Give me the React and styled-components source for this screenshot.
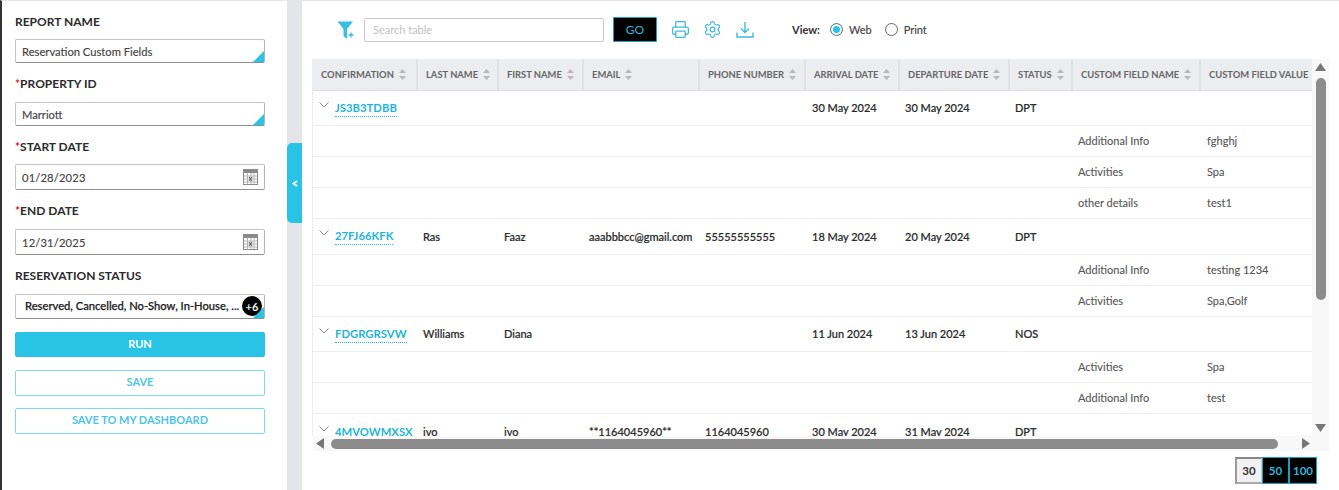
import React from "react";
import styled, { createGlobalStyle } from "styled-components";
import { Printer, Settings } from "lucide-react";

const GlobalStyle = createGlobalStyle`
  html, body {
    margin: 0;
    padding: 0;
    height: 100%;
    background: #fff;
    overflow: hidden;
  }
  body {
    font-family: Lato, "Open Sans", sans-serif;
    color: #333;
  }
`;

const fields = [
  { label: "REPORT NAME", value: "Reservation Custom Fields", kind: "select", labelGap: 9, gap: 12 },
  { label: "PROPERTY ID", value: "Marriott", kind: "select", required: true, labelGap: 10, gap: 12 },
  { label: "START DATE", value: "01/28/2023", kind: "date", required: true, labelGap: 9, gap: 12 },
  { label: "END DATE", value: "12/31/2025", kind: "date", required: true, labelGap: 10, gap: 12 },
];

const columns = [
  { name: "CONFIRMATION", width: 104 },
  { name: "LAST NAME", width: 81 },
  { name: "FIRST NAME", width: 85 },
  { name: "EMAIL", width: 116 },
  { name: "PHONE NUMBER", width: 106 },
  { name: "ARRIVAL DATE", width: 94 },
  { name: "DEPARTURE DATE", width: 110 },
  { name: "STATUS", width: 63 },
  { name: "CUSTOM FIELD NAME", width: 128 },
  { name: "CUSTOM FIELD VALUE", width: 112, noSort: true },
];

const reservations = [
  {
    id: "JS3B3TDBB",
    arrival: "30 May 2024",
    departure: "30 May 2024",
    status: "DPT",
    height: 35,
    details: [
      ["Additional Info", "fghghj"],
      ["Activities", "Spa"],
      ["other details", "test1"],
    ],
  },
  {
    id: "27FJ66KFK",
    last: "Ras",
    first: "Faaz",
    email: "aaabbbcc@gmail.com",
    phone: "55555555555",
    arrival: "18 May 2024",
    departure: "20 May 2024",
    status: "DPT",
    height: 36,
    details: [
      ["Additional Info", "testing 1234"],
      ["Activities", "Spa,Golf"],
    ],
  },
  {
    id: "FDGRGRSVW",
    last: "Williams",
    first: "Diana",
    arrival: "11 Jun 2024",
    departure: "13 Jun 2024",
    status: "NOS",
    height: 35,
    details: [
      ["Activities", "Spa"],
      ["Additional Info", "test"],
    ],
  },
  {
    id: "4MVOWMXSX",
    last: "ivo",
    first: "ivo",
    email: "**1164045960**",
    phone: "1164045960",
    arrival: "30 May 2024",
    departure: "31 May 2024",
    status: "DPT",
    height: 37,
    details: [],
  },
];

const Page = styled.div`
  display: flex;
  height: 490px;
  width: 1339px;
  border-left: 2px solid #333;
  border-top: 1px solid #e6e6e6;
  box-sizing: border-box;
  overflow: hidden;
`;

const Sidebar = styled.aside`
  width: 285px;
  flex: none;
  box-sizing: border-box;
  padding: 12px 22px 0 13px;
  display: flex;
  flex-direction: column;
`;

const Label = styled.label`
  display: block;
  height: 17px;
  line-height: 17px;
  font-size: 12px;
  font-weight: 700;
  color: #2b2b2b;
  margin-bottom: ${(p) => p.$gap}px;
  span {
    color: #e02020;
  }
`;

const Field = styled.div`
  margin-bottom: ${(p) => p.$gap}px;
`;

const InputBox = styled.div`
  position: relative;
  box-sizing: border-box;
  height: ${(p) => p.$height}px;
  border: 1px solid #c4c4c4;
  border-bottom: 1px solid #8f8f8f;
  border-right-color: #b5b5b5;
  border-radius: 2px;
  display: flex;
  align-items: center;
  justify-content: space-between;
  padding: 0 6px;
  font-size: 11.2px;
  color: #444;
  background: #fff;
  -webkit-text-stroke: 0.15px #444;
  letter-spacing: ${(p) => (p.$date ? "0.15px" : "0")};
`;

const Corner = styled.i`
  position: absolute;
  right: 0;
  bottom: 0;
  width: 0;
  height: 0;
  border-style: solid;
  border-width: 0 0 11px 11px;
  border-color: transparent transparent #29c3e6 transparent;
`;

const StatusText = styled.span`
  font-size: 11.2px;
  font-weight: 500;
  color: #222;
  padding: 0 0 2px 3px;
  white-space: nowrap;
  -webkit-text-stroke: 0.25px #222;
`;

const CountBadge = styled.b`
  position: absolute;
  right: 2px;
  top: 1px;
  width: 20px;
  height: 20px;
  border-radius: 50%;
  background: #000;
  color: #fff;
  font-size: 11px;
  font-weight: 700;
  display: flex;
  align-items: center;
  justify-content: center;
`;

const ActionButton = styled.button`
  display: block;
  width: 100%;
  box-sizing: border-box;
  height: ${(p) => (p.$primary ? 25 : 26)}px;
  margin-bottom: ${(p) => (p.$primary ? 13 : 12)}px;
  border: 1px solid ${(p) => (p.$primary ? "#29c3e6" : "#7fd8ee")};
  border-radius: 2px;
  background: ${(p) => (p.$primary ? "#29c3e6" : "#fff")};
  color: ${(p) => (p.$primary ? "#fff" : "#4fc3e4")};
  font-family: inherit;
  font-size: 11px;
  font-weight: 700;
  padding: 0 0 ${(p) => (p.$primary ? 2 : 4)}px;
`;

const Divider = styled.div`
  position: relative;
  width: 15px;
  flex: none;
  background: #e4e5e9;
`;

const CollapseTab = styled.div`
  position: absolute;
  left: 0;
  top: 142px;
  width: 15px;
  height: 80px;
  background: #29c3e6;
  border-radius: 5px 0 0 5px;
  display: flex;
  align-items: center;
  justify-content: center;
`;

const Main = styled.main`
  flex: 1;
  min-width: 0;
  padding: 16px 10px 0 11px;
  display: flex;
  flex-direction: column;
`;

const Toolbar = styled.div`
  display: flex;
  align-items: center;
  height: 25px;
  padding-left: 24px;
  margin-bottom: 17px;
  flex: none;
`;

const SearchInput = styled.input`
  box-sizing: border-box;
  width: 240px;
  height: 24px;
  margin-left: 9px;
  border: 1px solid #c9c9c9;
  border-radius: 2px;
  padding: 0 8px;
  font-family: inherit;
  font-size: 11px;
  outline: none;
  &::placeholder {
    color: #c2c2c2;
  }
`;

const GoButton = styled.button`
  box-sizing: border-box;
  width: 44px;
  height: 25px;
  margin-left: 9px;
  background: #000;
  border: 1px solid #1b9fc0;
  border-radius: 1px;
  color: #29b6d8;
  font-family: inherit;
  font-size: 12px;
  padding: 0;
`;

const IconSlot = styled.span`
  display: inline-flex;
  color: #3dbbe0;
  margin-left: ${(p) => p.$left}px;
`;

const ViewLabel = styled.span`
  margin-left: 38px;
  font-size: 11px;
  font-weight: 700;
  color: #333;
`;

const RadioOption = styled.span`
  display: inline-flex;
  align-items: center;
  margin-left: ${(p) => p.$left}px;
  font-size: 11px;
  color: #444;
  -webkit-text-stroke: 0.15px #444;
`;

const RadioDot = styled.i`
  box-sizing: border-box;
  width: 13px;
  height: 13px;
  margin-right: 6px;
  border-radius: 50%;
  border: 1px solid ${(p) => (p.$on ? "#777" : "#666")};
  background: ${(p) => (p.$on ? "#29c3e6" : "#fff")};
  box-shadow: ${(p) => (p.$on ? "inset 0 0 0 2px #fff" : "none")};
`;

const ScrollGrid = styled.div`
  display: grid;
  grid-template-columns: 999px 17px;
  grid-template-rows: 377px 15px;
  flex: none;
`;

const TableClip = styled.div`
  overflow: hidden;
  border-left: 1px solid #ececec;
  margin-left: -1px;
`;

const Table = styled.table`
  table-layout: fixed;
  width: 999px;
  border-collapse: collapse;
`;

const HeadCell = styled.th`
  height: 31px;
  padding: 0 0 0 8px;
  background: #ecedf0;
  border-right: 2px solid #e0e1e4;
  border-bottom: 1px solid #dcdde0;
  box-sizing: border-box;
  font-size: 9.4px;
  font-weight: 700;
  color: #666;
  text-align: left;
  white-space: nowrap;
  &:last-child {
    border-right: 0;
  }
`;

const SortIcon = styled.svg`
  margin-left: 5px;
  vertical-align: -2px;
`;

const Row = styled.tr`
  height: ${(p) => p.$height}px;
  border-bottom: 1px solid #eeeeee;
`;

const Cell = styled.td`
  padding: 0 0 0 ${(p) => p.$pad ?? 8}px;
  font-size: 11px;
  font-weight: ${(p) => (p.$light ? 400 : 500)};
  color: ${(p) => (p.$light ? "#555" : "#2b2b2b")};
  -webkit-text-stroke: ${(p) => (p.$light ? "0.1px #555" : "0.2px #2b2b2b")};
  white-space: nowrap;
  overflow: hidden;
`;

const ConfirmCell = styled.div`
  display: flex;
  align-items: flex-start;
  padding: 2px 0 0 6px;
  svg {
    margin: 1px 6px 0 0;
    flex: none;
  }
`;

const ConfirmLink = styled.a`
  color: #1fb4d8;
  -webkit-text-stroke: 0;
  font-size: 11.3px;
  font-weight: 700;
  padding-bottom: 2px;
  border-bottom: 1px dotted #1fb4d8;
`;

const Track = styled.div`
  display: flex;
  flex-direction: ${(p) => (p.$vertical ? "column" : "row")};
  align-items: center;
  background: #f8f8f8;
`;

const Thumb = styled.div`
  background: #8c8c8c;
  border-radius: 5px;
  ${(p) => (p.$vertical ? "width: 10px; height: 222px; margin-top: 7px;" : "height: 10px; width: 947px; margin-left: 7px;")}
`;

const ArrowCap = styled.svg`
  flex: none;
  ${(p) => p.$end && (p.$vertical ? "margin-top: auto; margin-bottom: 4px;" : "margin-left: auto; margin-right: 2px;")}
`;

const PageSizes = styled.div`
  display: flex;
  align-self: flex-end;
  margin: 6px 12px 0 0;
`;

const PageSize = styled.button`
  box-sizing: border-box;
  width: ${(p) => p.$width}px;
  height: 27px;
  padding: 0;
  font-family: inherit;
  font-size: 11.5px;
  font-weight: 700;
  background: ${(p) => (p.$active ? "#f1f1f1" : "#000")};
  color: ${(p) => (p.$active ? "#333" : "#29b6d8")};
  border: 1px solid ${(p) => (p.$active ? "#bbb" : "#1b9fc0")};
  ${(p) => p.$active && "border-width: 2px 1px 2px 2px; border-color: #888 #ccc #aaa #999;"}
`;

function CalendarIcon() {
  return (
    <svg width="15" height="16" viewBox="0 0 15 16">
      <rect x="0.5" y="0.5" width="14" height="15" fill="#fff" stroke="#8a8a8a" />
      <rect x="1" y="1" width="13" height="3" fill="#8a8a8a" />
      <path d="M1 7h13M1 10h13M1 13h13M4.500 4v11M8 4v11M11 4v11" stroke="#b5b5b5" strokeWidth="1" />
      <path d="M6 8l3 4M9 8l-3 4" stroke="#666" strokeWidth="1.200" />
    </svg>
  );
}

function FilterIcon() {
  return (
    <svg width="18" height="20" viewBox="0 0 18 20">
      <path d="M0.500 1.500h15.500l-6 7.500v10l-3.500-3v-7z" fill="#36bfe3" />
      <path d="M14 12.500v5M11.500 15h5" stroke="#36bfe3" strokeWidth="1.300" />
    </svg>
  );
}

function DownloadIcon() {
  return (
    <svg width="18" height="18" viewBox="0 0 18 18" fill="none" stroke="#3dbbe0" strokeWidth="1.400">
      <path d="M9 1v10M5 7.500l4 4 4-4" />
      <path d="M1 11.500v4.500h16v-4.500" />
    </svg>
  );
}

function SortCarets() {
  return (
    <SortIcon width="7" height="11" viewBox="0 0 7 11" fill="#b9b9bd">
      <path d="M3.500 0l3.500 4h-7zM3.500 11l-3.500-4h7z" />
    </SortIcon>
  );
}

function Chevron() {
  return (
    <svg width="10" height="6" viewBox="0 0 10 6" fill="none" stroke="#888" strokeWidth="1">
      <path d="M0.500 0.500l4.500 4.500 4.500-4.500" />
    </svg>
  );
}

function CollapseArrow() {
  return (
    <svg width="6" height="7" viewBox="0 0 6 7" fill="none" stroke="#fff" strokeWidth="1.800">
      <path d="M5 1l-3.500 2.500 3.500 2.500" />
    </svg>
  );
}

export default function App() {
  return (
    <>
      <GlobalStyle />
      <Page>
        <Sidebar>
          {fields.map((f) => (
            <div key={f.label}>
              <Label $gap={f.labelGap}>
                {f.required && <span>*</span>}
                {f.label}
              </Label>
              <Field $gap={f.gap}>
                <InputBox $height={f.kind === "date" ? 26 : 24} $date={f.kind === "date"}>
                  {f.value}
                  {f.kind === "date" ? <CalendarIcon /> : <Corner />}
                </InputBox>
              </Field>
            </div>
          ))}
          <Label $gap={10}>RESERVATION STATUS</Label>
          <Field $gap={13}>
            <InputBox $height={25}>
              <StatusText>Reserved, Cancelled, No-Show, In-House, ...</StatusText>
              <CountBadge>+6</CountBadge>
              <Corner />
            </InputBox>
          </Field>
          <ActionButton $primary>RUN</ActionButton>
          <ActionButton>SAVE</ActionButton>
          <ActionButton>SAVE TO MY DASHBOARD</ActionButton>
        </Sidebar>
        <Divider>
          <CollapseTab>
            <CollapseArrow />
          </CollapseTab>
        </Divider>
        <Main>
          <Toolbar>
            <FilterIcon />
            <SearchInput placeholder="Search table" />
            <GoButton>GO</GoButton>
            <IconSlot $left={14}>
              <Printer size={19} strokeWidth={1.6} />
            </IconSlot>
            <IconSlot $left={13}>
              <Settings size={19} strokeWidth={1.5} />
            </IconSlot>
            <IconSlot $left={14}>
              <DownloadIcon />
            </IconSlot>
            <ViewLabel>View:</ViewLabel>
            <RadioOption $left={10}>
              <RadioDot $on />
              Web
            </RadioOption>
            <RadioOption $left={13}>
              <RadioDot />
              Print
            </RadioOption>
          </Toolbar>
          <ScrollGrid>
            <TableClip>
              <Table>
                <colgroup>
                  {columns.map((c) => (
                    <col key={c.name} width={c.width} />
                  ))}
                </colgroup>
                <thead>
                  <tr>
                    {columns.map((c) => (
                      <HeadCell key={c.name}>
                        {c.name}
                        {!c.noSort && <SortCarets />}
                      </HeadCell>
                    ))}
                  </tr>
                </thead>
                <tbody>
                  {reservations.map((r) => (
                    <React.Fragment key={r.id}>
                      <Row $height={r.height}>
                        <Cell $pad={0}>
                          <ConfirmCell>
                            <Chevron />
                            <ConfirmLink>{r.id}</ConfirmLink>
                          </ConfirmCell>
                        </Cell>
                        <Cell $pad={6}>{r.last}</Cell>
                        <Cell $pad={6}>{r.first}</Cell>
                        <Cell $pad={6}>{r.email}</Cell>
                        <Cell $pad={6}>{r.phone}</Cell>
                        <Cell $pad={7}>{r.arrival}</Cell>
                        <Cell $pad={6}>{r.departure}</Cell>
                        <Cell $pad={6}>{r.status}</Cell>
                        <Cell />
                        <Cell />
                      </Row>
                      {r.details.map(([name, value]) => (
                        <Row key={name} $height={31}>
                          <Cell colSpan={8} />
                          <Cell $light $pad={6}>{name}</Cell>
                          <Cell $light $pad={7}>{value}</Cell>
                        </Row>
                      ))}
                    </React.Fragment>
                  ))}
                </tbody>
              </Table>
            </TableClip>
            <Track $vertical>
              <ArrowCap width="11" height="8" viewBox="0 0 11 8" fill="#777" style={{ marginTop: 4 }}>
                <path d="M5.500 0l5.500 8h-11z" />
              </ArrowCap>
              <Thumb $vertical />
              <ArrowCap $vertical $end width="11" height="8" viewBox="0 0 11 8" fill="#777">
                <path d="M5.500 8l-5.500-8h11z" />
              </ArrowCap>
            </Track>
            <Track>
              <ArrowCap width="8" height="11" viewBox="0 0 8 11" fill="#777" style={{ marginLeft: 3 }}>
                <path d="M0 5.500l8-5.500v11z" />
              </ArrowCap>
              <Thumb />
              <ArrowCap $end width="8" height="11" viewBox="0 0 8 11" fill="#777">
                <path d="M8 5.500l-8 5.500v-11z" />
              </ArrowCap>
            </Track>
            <Track />
          </ScrollGrid>
          <PageSizes>
            <PageSize $active $width={27}>30</PageSize>
            <PageSize $width={27}>50</PageSize>
            <PageSize $width={28}>100</PageSize>
          </PageSizes>
        </Main>
      </Page>
    </>
  );
}
